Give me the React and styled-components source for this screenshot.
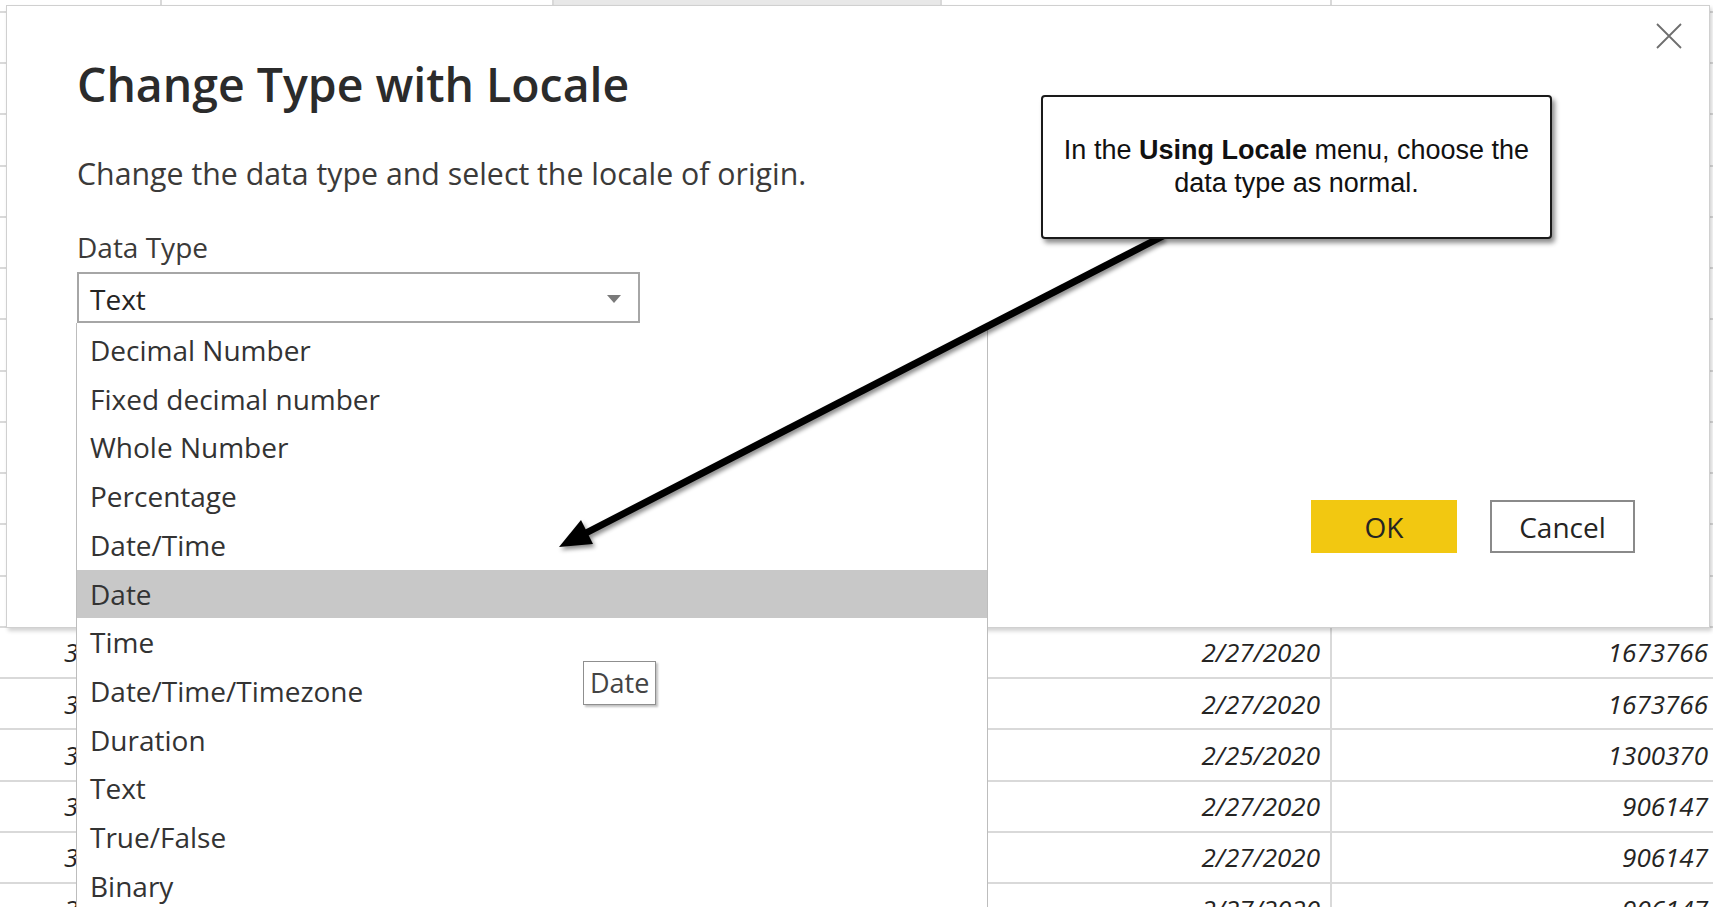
import React from "react";
import styled, { createGlobalStyle } from "styled-components";

const GlobalStyle = createGlobalStyle`
  html, body { margin: 0; padding: 0; background: #ffffff; overflow: hidden; }
  body { font-family: "Open Sans", "Noto Sans", sans-serif; }
`;

const Page = styled.div`
  position: relative;
  width: 1713px;
  height: 907px;
  overflow: hidden;
  background: #ffffff;
`;

const Grid = styled.div`
  display: grid;
  grid-template-columns: 162px 392px 388px 390px 388px;
  grid-template-rows: 13px;
  grid-auto-rows: 51.24px;
  width: 1720px;
`;

const Cell = styled.div`
  box-sizing: border-box;
  border-right: 2px solid #d9d9d9;
  border-bottom: 2px solid #d9d9d9;
  background: ${(p) => (p.$selected ? "#e8e8e8" : "#ffffff")};
  display: flex;
  align-items: center;
  justify-content: flex-end;
  padding-right: 10px;
  font-family: "Open Sans", sans-serif;
  font-style: italic;
  font-size: 26px;
  line-height: 34px;
  color: #252423;
  white-space: nowrap;
  overflow: hidden;
`;

const Dialog = styled.div`
  position: absolute;
  left: 6px;
  top: 5px;
  width: 1704px;
  height: 623px;
  box-sizing: border-box;
  background: #ffffff;
  border: 1px solid #d0d0d0;
  box-shadow: 2px 3px 4px rgba(0, 0, 0, 0.18);
  padding: 50px 74px 0 70px;
  display: flex;
  flex-direction: column;
`;

const CloseButton = styled.button`
  position: absolute;
  top: 17px;
  right: 27px;
  width: 26px;
  height: 26px;
  padding: 0;
  border: none;
  background: transparent;
  display: flex;
`;

const Title = styled.h1`
  margin: 0;
  font-family: "Open Sans", sans-serif;
  font-weight: 600;
  font-size: 46.4px;
  line-height: 56px;
  color: #2b2b2b;
`;

const Subtitle = styled.p`
  margin: 44px 0 0;
  font-size: 30.3px;
  line-height: 36px;
  color: #3b3a39;
  white-space: nowrap;
`;

const Label = styled.div`
  margin-top: 37px;
  font-size: 28px;
  line-height: 36px;
  color: #3b3a39;
`;

const SelectWrap = styled.div`
  position: relative;
  margin-top: 7px;
  width: 563px;
`;

const SelectBox = styled.div`
  box-sizing: border-box;
  width: 563px;
  height: 51px;
  border: 2px solid #a6a6a6;
  display: flex;
  align-items: center;
  justify-content: space-between;
  padding: 3px 17px 0 11px;
  font-size: 28px;
  line-height: 44px;
  color: #252423;
`;

const List = styled.div`
  position: absolute;
  left: -1px;
  top: 100%;
  width: 912px;
  height: 600px;
  box-sizing: border-box;
  padding-top: 3px;
  background: #ffffff;
  border-left: 1px solid #bdbdbd;
  border-right: 1px solid #bdbdbd;
  z-index: 2;
`;

const Item = styled.div`
  height: 48.73px;
  padding-left: 13px;
  font-size: 28px;
  line-height: 48.73px;
  color: #333333;
  background: ${(p) => (p.$active ? "#c8c8c8" : "transparent")};
  white-space: nowrap;
`;

const Tip = styled.div`
  position: absolute;
  left: 506px;
  top: 338px;
  width: 73px;
  height: 44px;
  box-sizing: border-box;
  border: 1px solid #8f8f8f;
  background: #ffffff;
  box-shadow: 2px 2px 2px rgba(0, 0, 0, 0.25);
  padding-left: 6px;
  font-size: 27px;
  line-height: 41px;
  color: #444444;
`;

const ButtonRow = styled.div`
  margin-top: 177px;
  display: flex;
  justify-content: flex-end;
  gap: 33px;
`;

const Button = styled.button`
  box-sizing: border-box;
  width: ${(p) => (p.$primary ? "146px" : "145px")};
  height: 53px;
  padding: 0;
  border: ${(p) => (p.$primary ? "none" : "2px solid #8a8a8a")};
  background: ${(p) => (p.$primary ? "#f2c811" : "#ffffff")};
  font-family: "Open Sans", sans-serif;
  font-size: 28px;
  color: #252423;
`;

const Callout = styled.div`
  position: absolute;
  left: 1041px;
  top: 95px;
  width: 511px;
  height: 144px;
  box-sizing: border-box;
  border: 2px solid #1a1a1a;
  border-radius: 4px;
  background: #ffffff;
  box-shadow: 3px 4px 5px rgba(0, 0, 0, 0.45);
  display: flex;
  align-items: center;
  justify-content: center;
  text-align: center;
  font-family: "Liberation Sans", Arial, sans-serif;
  font-size: 27px;
  line-height: 33px;
  color: #111111;
  z-index: 4;
`;

const ArrowLayer = styled.svg`
  position: absolute;
  left: 0;
  top: 0;
  width: 1713px;
  height: 907px;
  pointer-events: none;
  z-index: 3;
`;

const col0 = ["", "318840", "318841", "318842", "318843", "318844", "318845", "318846", "318847", "318848", "318849", "318850", "318851", "312457", "312458", "309871", "301122", "301123", "301124"];
const col2 = ["", "3/22/2020", "3/22/2020", "3/21/2020", "3/21/2020", "3/20/2020", "3/20/2020", "3/19/2020", "3/19/2020", "3/18/2020", "3/18/2020", "3/17/2020", "3/17/2020", "3/16/2020", "3/16/2020", "3/15/2020", "3/15/2020", "3/14/2020", "3/14/2020"];
const col3 = ["", "2/27/2020", "2/27/2020", "2/27/2020", "2/25/2020", "2/27/2020", "2/27/2020", "2/27/2020", "2/25/2020", "2/27/2020", "2/27/2020", "2/27/2020", "2/27/2020", "2/27/2020", "2/27/2020", "2/25/2020", "2/27/2020", "2/27/2020", "2/27/2020"];
const col4 = ["", "1673766", "1673766", "1300370", "906147", "906147", "1673766", "1673766", "1300370", "906147", "906147", "1673766", "1673766", "1673766", "1673766", "1300370", "906147", "906147", "906147"];

const types = [
  "Decimal Number",
  "Fixed decimal number",
  "Whole Number",
  "Percentage",
  "Date/Time",
  "Date",
  "Time",
  "Date/Time/Timezone",
  "Duration",
  "Text",
  "True/False",
  "Binary",
];

export default function App() {
  return (
    <>
      <GlobalStyle />
      <Page>
        <Grid>
          {col0.map((v, i) => (
            <React.Fragment key={i}>
              <Cell>{v}</Cell>
              <Cell></Cell>
              <Cell $selected>{col2[i]}</Cell>
              <Cell>{col3[i]}</Cell>
              <Cell>{col4[i]}</Cell>
            </React.Fragment>
          ))}
        </Grid>

        <Dialog>
          <CloseButton aria-label="Close">
            <svg width="26" height="26" viewBox="0 0 26 26">
              <path d="M1 1 L25 25 M25 1 L1 25" stroke="#6e6e6e" strokeWidth="1.8" fill="none" />
            </svg>
          </CloseButton>
          <Title>Change Type with Locale</Title>
          <Subtitle>Change the data type and select the locale of origin.</Subtitle>
          <Label>Data Type</Label>
          <SelectWrap>
            <SelectBox>
              <span>Text</span>
              <svg width="14" height="8" viewBox="0 0 14 8">
                <path d="M0 0 H14 L7 8 Z" fill="#7a7a7a" />
              </svg>
            </SelectBox>
            <List>
              {types.map((t) => (
                <Item key={t} $active={t === "Date"}>{t}</Item>
              ))}
              <Tip>Date</Tip>
            </List>
          </SelectWrap>
          <ButtonRow>
            <Button $primary>OK</Button>
            <Button>Cancel</Button>
          </ButtonRow>
        </Dialog>

        <ArrowLayer viewBox="0 0 1713 907">
          <defs>
            <filter id="arrowShadow" x="-10%" y="-10%" width="130%" height="130%">
              <feDropShadow dx="2" dy="3" stdDeviation="2" floodColor="#000" floodOpacity="0.45" />
            </filter>
          </defs>
          <g filter="url(#arrowShadow)">
            <line x1="1163" y1="236" x2="584" y2="534" stroke="#000" strokeWidth="7" />
            <polygon points="559,547 593,544 581,520" fill="#000" />
          </g>
        </ArrowLayer>

        <Callout>
          <div>
            In the <b>Using Locale</b> menu, choose the
            <br />
            data type as normal.
          </div>
        </Callout>
      </Page>
    </>
  );
}
